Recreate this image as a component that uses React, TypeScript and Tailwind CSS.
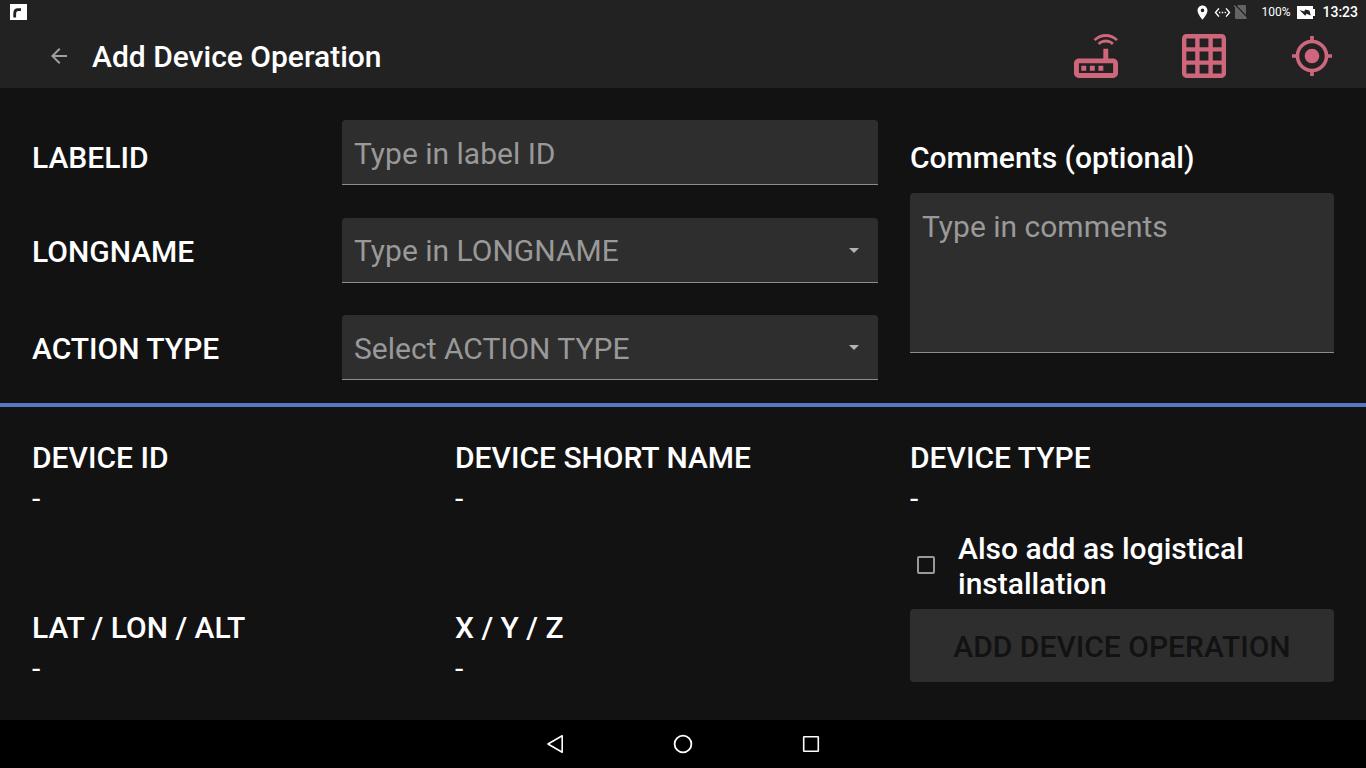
import type { ReactNode } from "react";
import {
  MdArrowBack,
  MdGpsFixed,
  MdGridOn,
  MdLocationOn,
  MdOutlineRouter,
  MdSettingsEthernet,
} from "react-icons/md";

function StatusBar() {
  return (
    <div className="flex h-6 items-center justify-between bg-[#222222] pr-2 pl-2.5 text-white">
      <svg viewBox="0 0 17 16" className="h-4 w-[17px]" aria-hidden="true">
        <rect width="17" height="16" fill="#fff" />
        <path d="M4.7 13.5V9.5Q4.7 5.6 8 5.6H11" fill="none" stroke="#222" strokeWidth="2.8" />
      </svg>
      <div className="flex items-center">
        <MdLocationOn className="size-[17px]" />
        <MdSettingsEthernet className="ml-[3px] size-[17px]" />
        <svg viewBox="0 0 13 14" className="ml-[3px] h-3.5 w-[13px]" aria-hidden="true">
          <path d="M4 0H11Q12 0 12 1V14H2Q1 14 1 13V3Z" fill="#636363" />
          <path d="M1.2 0L13 12.2" stroke="#222" strokeWidth="1.5" />
          <path d="M0 .5L12.5 13.5" stroke="#6c6c6c" strokeWidth="1.1" />
        </svg>
        <span className="ml-3.5 text-xs leading-4">100%</span>
        <svg viewBox="0 0 18 13" className="ml-[7px] h-[13px] w-[18px]" aria-hidden="true">
          <path d="M0 0H16V3H18V10H16V13H0Z" fill="#fff" />
          <path d="M2.5 4L7.2 5.6L8.2 3.6L12.4 4.6L13.8 9.6L9.6 7.8L8.2 9.8Z" fill="#222" />
        </svg>
        <span className="ml-[7px] text-sm leading-4 font-medium">13:23</span>
      </div>
    </div>
  );
}

function Header() {
  return (
    <header className="flex h-16 items-center bg-[#222222] pr-[34px] pl-[47px]">
      <button type="button" aria-label="Back" className="text-[#a0a0a0]">
        <MdArrowBack className="size-6" />
      </button>
      <h1 className="ml-[21px] flex-1 text-[30px] leading-[35px] font-medium text-white">
        Add Device Operation
      </h1>
      <div className="flex items-center gap-16 text-[#d0667b]">
        <button type="button" aria-label="Router">
          <MdOutlineRouter viewBox="3 3 18 18" className="size-11" />
        </button>
        <button type="button" aria-label="Grid">
          <MdGridOn viewBox="2 2 20 20" className="size-11" />
        </button>
        <button type="button" aria-label="Locate" className="ml-0.5">
          <MdGpsFixed viewBox="1 1 22 22" className="size-10" />
        </button>
      </div>
    </header>
  );
}

const fieldClass =
  "block w-full appearance-none rounded-t border-b border-[#8c8c8c] bg-[#2e2e2e] px-3 text-[30px] leading-[35px] font-normal text-white outline-none placeholder:text-[#999999] placeholder:opacity-100";

function Caret() {
  return (
    <svg
      viewBox="0 0 10 5"
      className="pointer-events-none absolute top-[30px] right-[19px] h-[5px] w-2.5"
      aria-hidden="true"
    >
      <path d="M0 0H10L5 5Z" fill="#b3b3b3" />
    </svg>
  );
}

function Field({ id, label, first, children }: { id: string; label: string; first?: boolean; children: ReactNode }) {
  return (
    <div className="flex items-center">
      <label htmlFor={id} className={first ? "w-[310px] shrink-0 pt-2.5" : "w-[310px] shrink-0 pt-0.5"}>
        {label}
      </label>
      <div className="relative flex-1">{children}</div>
    </div>
  );
}

function Info({ label, value }: { label: string; value: string }) {
  return (
    <dl>
      <dt>{label}</dt>
      <dd className="mt-1.5 font-normal">{value}</dd>
    </dl>
  );
}

function NavBar() {
  return (
    <nav className="flex h-12 items-center justify-center gap-[104px] bg-black text-white">
      <button type="button" aria-label="Back">
        <svg viewBox="0 0 24 24" className="size-6" fill="none" stroke="currentColor" strokeWidth="1.6" strokeLinejoin="round">
          <path d="M19.2 3.8V20.2L5 12Z" />
        </svg>
      </button>
      <button type="button" aria-label="Home">
        <svg viewBox="0 0 24 24" className="size-6" fill="none" stroke="currentColor" strokeWidth="1.8">
          <circle cx="12" cy="12" r="8.4" />
        </svg>
      </button>
      <button type="button" aria-label="Recent apps">
        <svg viewBox="0 0 24 24" className="size-6" fill="none" stroke="currentColor" strokeWidth="1.6" strokeLinejoin="round">
          <rect x="4.7" y="4.7" width="14.6" height="14.6" rx=".5" />
        </svg>
      </button>
    </nav>
  );
}

export default function App() {
  return (
    <div className="flex min-h-screen flex-col bg-[#121212] font-['Roboto',sans-serif] text-white">
      <StatusBar />
      <Header />
      <main className="flex-1 text-[30px] leading-[35px] font-medium">
        <section className="grid grid-cols-[423fr_212fr] gap-8 border-b-4 border-[#5478c4] px-8 pt-8 pb-[23px]">
          <div className="flex min-h-[260px] flex-col justify-between">
            <Field id="label-id" label="LABELID" first>
              <input id="label-id" type="text" placeholder="Type in label ID" className={`${fieldClass} h-[65px] pt-0.5`} />
            </Field>
            <Field id="longname" label="LONGNAME">
              <input
                id="longname"
                type="text"
                role="combobox"
                aria-expanded="false"
                placeholder="Type in LONGNAME"
                className={`${fieldClass} h-[65px] pt-0.5`}
              />
              <Caret />
            </Field>
            <Field id="action-type" label="ACTION TYPE">
              <select id="action-type" defaultValue="" className={`${fieldClass} h-[65px] pt-0.5 invalid:text-[#999999]`} required>
                <option value="" disabled>
                  Select ACTION TYPE
                </option>
              </select>
              <Caret />
            </Field>
          </div>
          <div className="pt-5">
            <label htmlFor="comments" className="block">
              Comments (optional)
            </label>
            <textarea
              id="comments"
              placeholder="Type in comments"
              className={`${fieldClass} mt-[18px] h-40 resize-none pt-4`}
            />
          </div>
        </section>

        <section className="grid grid-cols-[423fr_212fr] gap-8 px-8 pt-[33px] pb-8">
          <div className="grid grid-cols-2 content-start gap-y-[94px]">
            <Info label="DEVICE ID" value="-" />
            <Info label="DEVICE SHORT NAME" value="-" />
            <Info label="LAT / LON / ALT" value="-" />
            <Info label="X / Y / Z" value="-" />
          </div>
          <div>
            <Info label="DEVICE TYPE" value="-" />
            <label className="mt-[15px] flex items-center gap-4">
              <span className="flex w-8 shrink-0 justify-center pb-0.5">
                <input
                  type="checkbox"
                  className="size-[18px] appearance-none rounded-xs border-2 border-[#999999] checked:bg-[#999999]"
                />
              </span>
              <span>Also add as logistical installation</span>
            </label>
            <button type="button" disabled className="mt-2 h-[73px] w-full rounded bg-[#2e2e2e] pt-0.5 text-[#121212]">
              ADD DEVICE OPERATION
            </button>
          </div>
        </section>
      </main>
      <NavBar />
    </div>
  );
}
